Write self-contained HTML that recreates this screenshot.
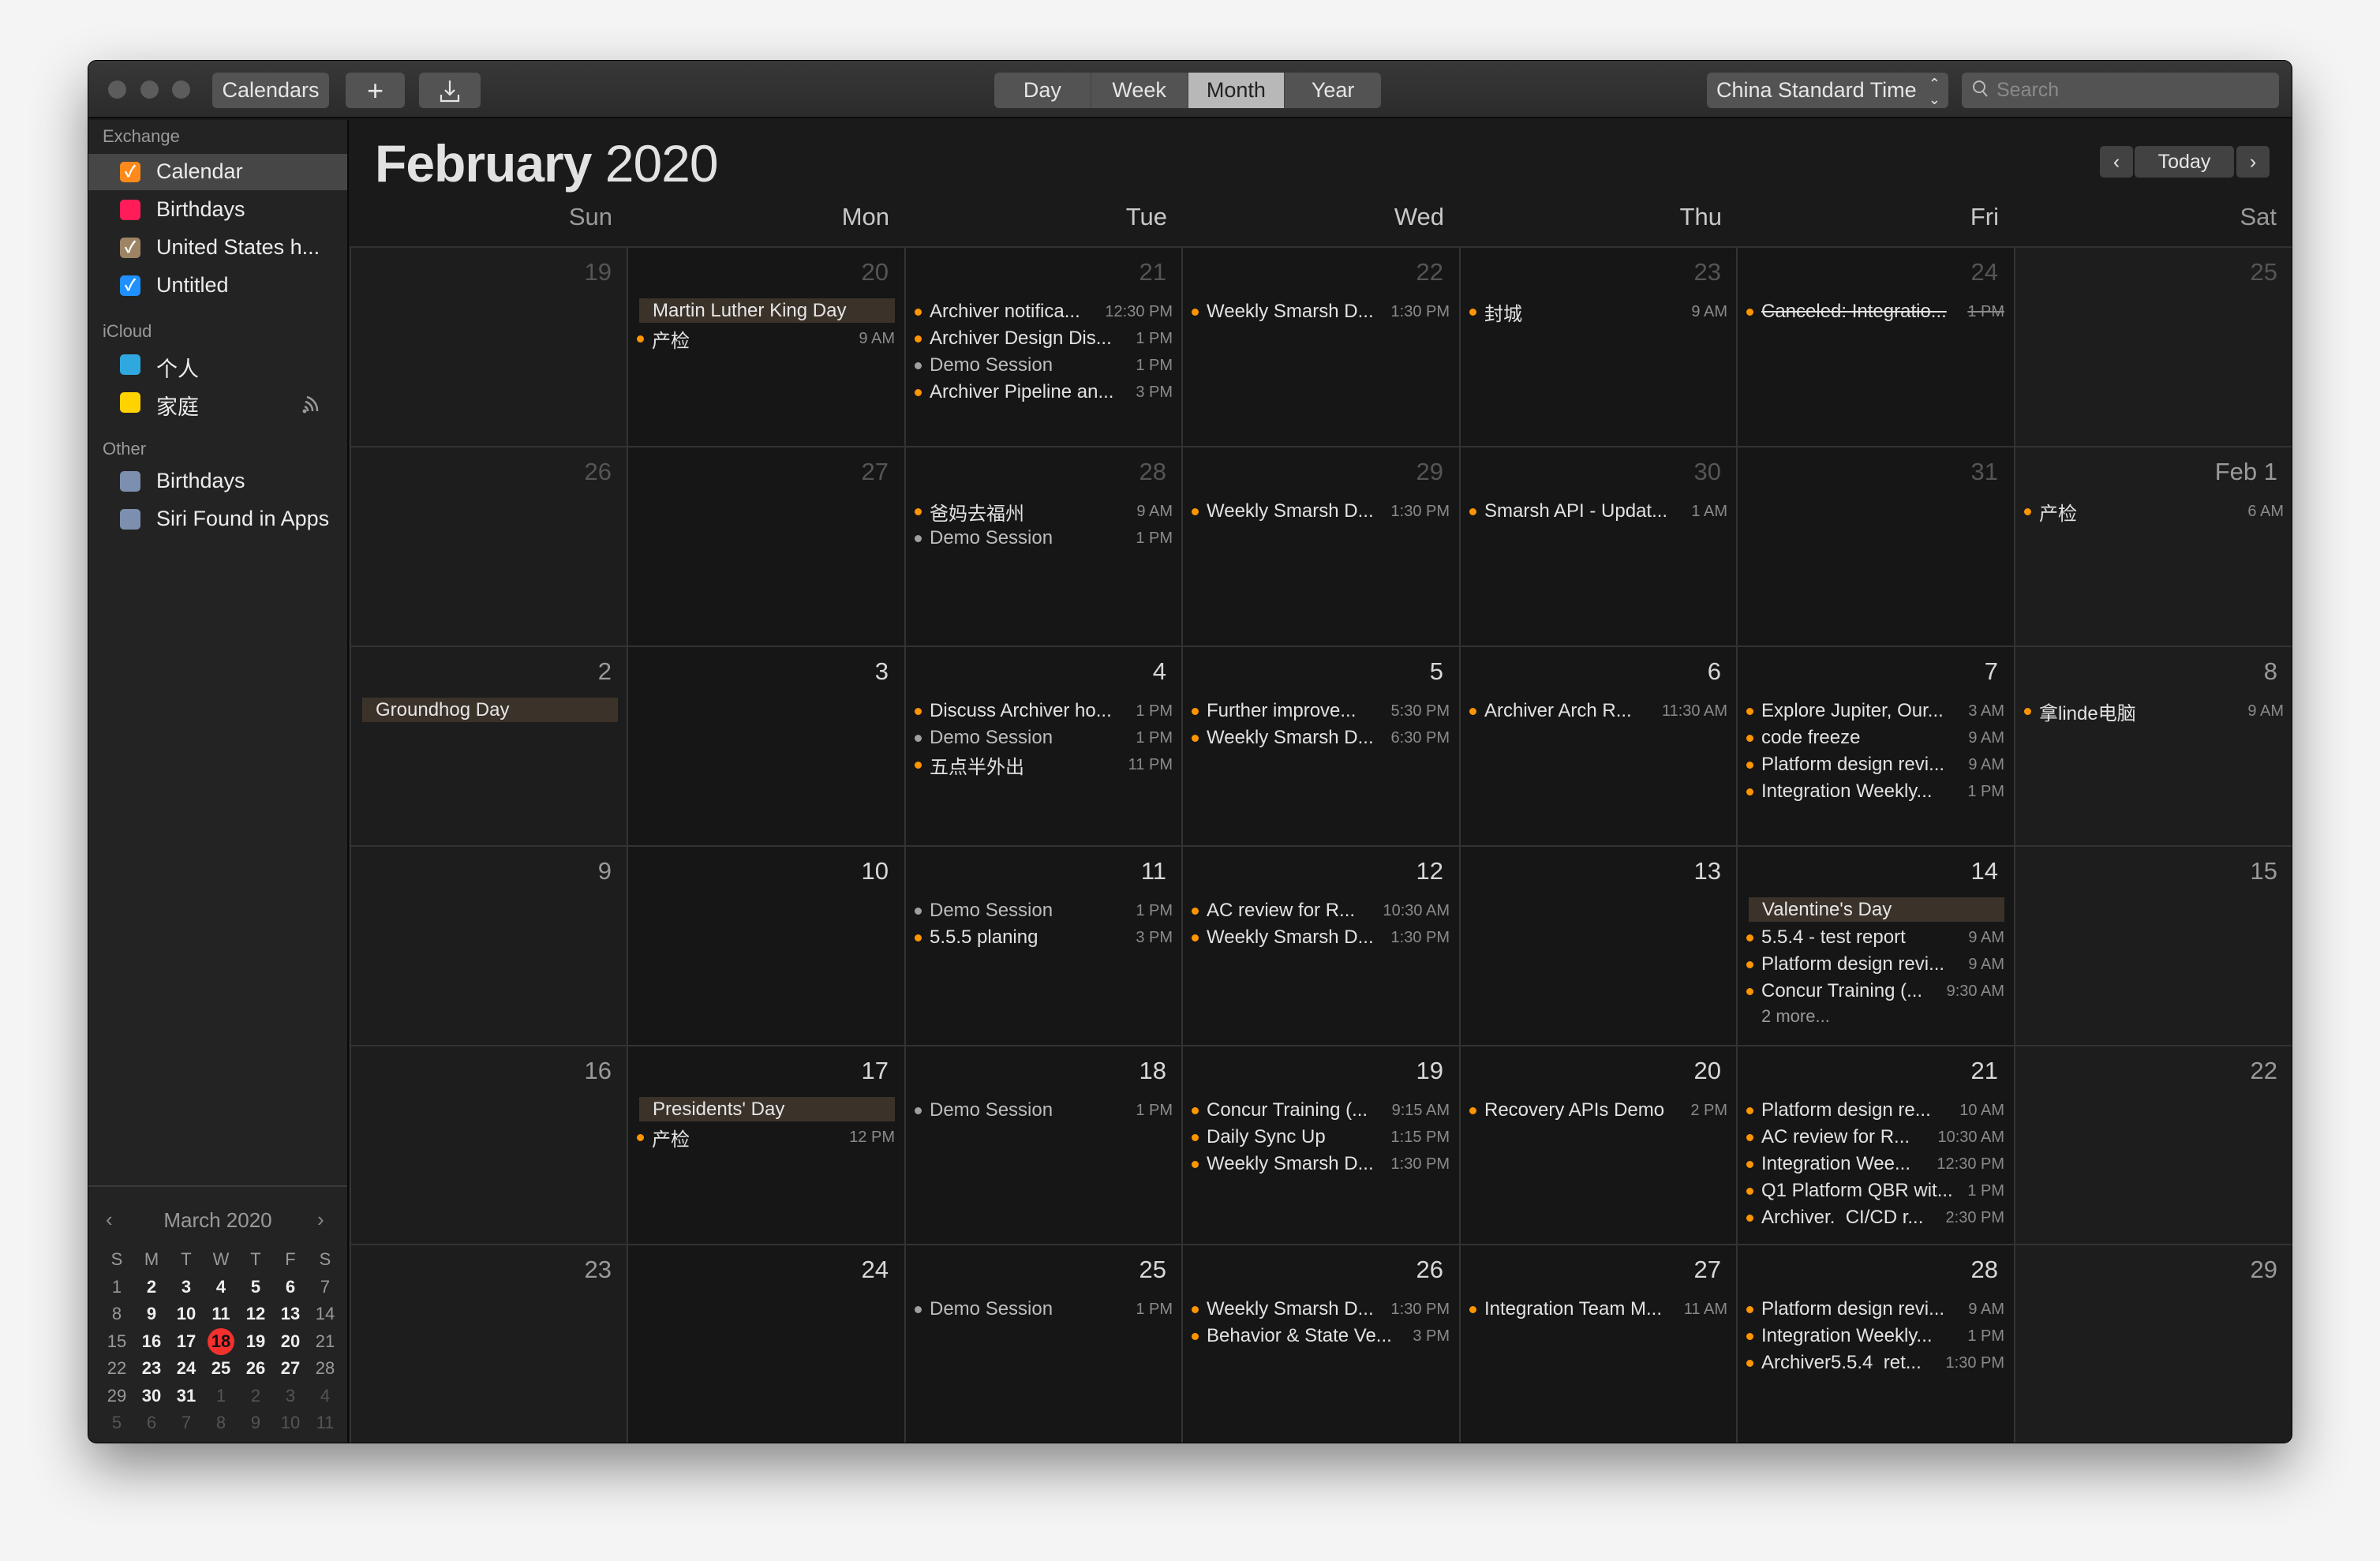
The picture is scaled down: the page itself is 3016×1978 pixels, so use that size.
<!DOCTYPE html>
<html><head><meta charset="utf-8">
<style>
*{box-sizing:border-box;margin:0;padding:0}
body{width:3016px;height:1978px;background:#f4f4f4;font-family:"Liberation Sans","Noto Sans CJK SC",sans-serif;position:relative;overflow:hidden}
.win{position:absolute;left:112px;top:77px;width:2792px;height:1751px;border-radius:10px;overflow:hidden;background:#1a1a1a;box-shadow:0 30px 70px rgba(0,0,0,.45),0 0 0 1px #000}
.tb{position:absolute;left:0;top:0;width:2792px;height:73px;background:linear-gradient(#383838,#2b2b2b);border-bottom:2px solid #0c0c0c}
.tl{position:absolute;top:25px;width:23px;height:23px;border-radius:50%;background:#5c5c5c}
.btn{position:absolute;top:15px;height:45px;border-radius:6px;background:#535353;color:#e6e6e6;font-size:27px;line-height:45px;text-align:center}
.seg{position:absolute;top:15px;height:45px;left:1148px;width:490px;border-radius:6px;background:#535353;display:flex;overflow:hidden}
.seg div{flex:1;color:#e6e6e6;font-size:27px;line-height:45px;text-align:center;border-right:1px solid #444}
.seg .on{background:#b8b8b8;color:#222}
.sb{position:absolute;left:0;top:75px;width:330px;height:1676px;background:#232323;border-right:2px solid #0a0a0a}
.sh{position:absolute;left:18px;font-size:22px;color:#9a9a9a}
.si{position:absolute;left:0;width:328px;height:46px}
.si .bx{position:absolute;left:40px;top:10px;width:26px;height:26px;border-radius:5px}
.si .tx{position:absolute;left:86px;top:7px;font-size:27px;color:#ececec}
.ck{color:#fff;font-size:20px;line-height:26px;text-align:center;font-weight:bold}
.mini{position:absolute;left:0;top:1350px;width:328px;border-top:2px solid #3a3a3a;height:330px}
.title{position:absolute;left:363px;top:92px;font-size:66px;color:#e2e2e2;letter-spacing:-1px}
.wd{position:absolute;top:180px;font-size:31px;color:#c8c8c8;text-align:right;width:300px}
.nav{position:absolute;top:108px;height:40px;background:#424242;border-radius:5px;color:#e6e6e6;font-size:25px;line-height:40px;text-align:center}
.c{position:absolute;width:352px;border-top:2px solid #333;border-left:2px solid #333;background:#161616;overflow:hidden}
.we{background:#1d1d1d}
.n{position:absolute;right:20px;top:13px;font-size:31px;color:#d8d8d8}
.g .n{color:#555}
.we .n{color:#9a9a9a}
.g.we .n{color:#555}
.ev{position:absolute;left:0;right:0;top:64px}
.e{height:34px;display:flex;align-items:center;padding-left:11px;padding-right:12px;white-space:nowrap}
.e i{width:9px;height:9px;border-radius:50%;background:#ff9500;flex:none;margin-right:10px}
.e .t{flex:1;overflow:hidden;font-size:24px;color:#e2e2e2}
.e .m{font-size:20px;color:#8a8a8a;margin-left:8px}
.e.d i{background:#a0a0a0}.e.d .t{color:#bdbdbd}
.e.s .t,.e.s .m{text-decoration:line-through}
.bn{height:31px;margin:0 12px 3px 14px;background:#3b322a;color:#e6e6e6;font-size:24px;line-height:31px;padding-left:17px;white-space:nowrap;overflow:hidden}
.more{font-size:22px;color:#9a9a9a;padding-left:30px;height:30px;line-height:30px}
</style></head><body>
<div class="win">
 <div class="tb">
  <div class="tl" style="left:25px"></div><div class="tl" style="left:66px"></div><div class="tl" style="left:106px"></div>
  <div class="btn" style="left:157px;width:148px">Calendars</div>
  <div class="btn" style="left:326px;width:75px;font-size:36px">+</div>
  <div class="btn" style="left:419px;width:78px"><svg width="26" height="30" viewBox="0 0 26 30" style="margin-top:8px"><path d="M13 2v18M7 14l6 6 6-6M2 20v8h22v-8" fill="none" stroke="#e6e6e6" stroke-width="2.2"/></svg></div>
  <div class="seg"><div>Day</div><div>Week</div><div class="on">Month</div><div style="border:none">Year</div></div>
  <div class="btn" style="left:2051px;width:306px;text-align:left;padding-left:12px">China Standard Time <span style="position:absolute;right:10px;font-size:18px;line-height:20px;top:4px">⌃<br>⌄</span></div>
  <div class="btn" style="left:2374px;width:402px;text-align:left;padding-left:44px;color:#8a8a8a;font-size:25px"><svg width="24" height="26" viewBox="0 0 24 26" style="position:absolute;left:12px;top:8px"><circle cx="10" cy="10" r="7" fill="none" stroke="#bbb" stroke-width="2"/><path d="M15 16l5 6" stroke="#bbb" stroke-width="2"/></svg>Search</div>
 </div>
 <div class="sb">
  <div class="sh" style="top:8px">Exchange</div>
  <div class="si" style="top:43px;background:#464646"><div class="bx ck" style="background:#ff8a1c">✓</div><div class="tx">Calendar</div></div>
  <div class="si" style="top:91px"><div class="bx" style="background:#ff1c58"></div><div class="tx">Birthdays</div></div>
  <div class="si" style="top:139px"><div class="bx ck" style="background:#9c8464">✓</div><div class="tx">United States h...</div></div>
  <div class="si" style="top:187px"><div class="bx ck" style="background:#1e90ff">✓</div><div class="tx">Untitled</div></div>
  <div class="sh" style="top:255px">iCloud</div>
  <div class="si" style="top:287px"><div class="bx" style="background:#2fa8e0"></div><div class="tx">个人</div></div>
  <div class="si" style="top:335px"><div class="bx" style="background:#ffd200"></div><div class="tx">家庭</div><svg width="34" height="28" viewBox="0 0 34 28" style="position:absolute;left:268px;top:10px"><circle cx="6" cy="24" r="2.5" fill="#999"/><path d="M10 24a6 6 0 0 0-4-6M16 24a12 12 0 0 0-9-12M22 24a18 18 0 0 0-13-18" fill="none" stroke="#999" stroke-width="2.5"/></svg></div>
  <div class="sh" style="top:404px">Other</div>
  <div class="si" style="top:435px"><div class="bx" style="background:#7d8fae"></div><div class="tx">Birthdays</div></div>
  <div class="si" style="top:483px"><div class="bx" style="background:#7d8fae"></div><div class="tx">Siri Found in Apps</div></div>
  <div class="mini">
   <div style="position:absolute;left:22px;top:26px;font-size:26px;color:#8a8a8a">‹</div>
   <div style="position:absolute;left:0;width:328px;top:27px;text-align:center;font-size:26px;color:#9a9a9a">March 2020</div>
   <div style="position:absolute;left:290px;top:26px;font-size:26px;color:#8a8a8a">›</div>
   <div style="position:absolute;left:14px;top:75px;font-size:22px;line-height:34.5px;width:300px">
    <div style="display:grid;grid-template-columns:repeat(7,44px);text-align:center;color:#9a9a9a">
     <span>S</span><span>M</span><span>T</span><span>W</span><span>T</span><span>F</span><span>S</span>
     <span>1</span><b style="color:#eee">2</b><b style="color:#eee">3</b><b style="color:#eee">4</b><b style="color:#eee">5</b><b style="color:#eee">6</b><span>7</span>
     <span>8</span><b style="color:#eee">9</b><b style="color:#eee">10</b><b style="color:#eee">11</b><b style="color:#eee">12</b><b style="color:#eee">13</b><span>14</span>
     <span>15</span><b style="color:#eee">16</b><b style="color:#eee">17</b><b style="color:#111;position:relative"><span style="position:absolute;left:5px;top:0;width:34px;height:34px;border-radius:50%;background:#f2312f;z-index:0"></span><span style="position:relative">18</span></b><b style="color:#eee">19</b><b style="color:#eee">20</b><span>21</span>
     <span>22</span><b style="color:#eee">23</b><b style="color:#eee">24</b><b style="color:#eee">25</b><b style="color:#eee">26</b><b style="color:#eee">27</b><span>28</span>
     <span>29</span><b style="color:#eee">30</b><b style="color:#eee">31</b><span style="color:#555">1</span><span style="color:#555">2</span><span style="color:#555">3</span><span style="color:#555">4</span>
     <span style="color:#555">5</span><span style="color:#555">6</span><span style="color:#555">7</span><span style="color:#555">8</span><span style="color:#555">9</span><span style="color:#555">10</span><span style="color:#555">11</span>
    </div>
   </div>
  </div>
 </div>
 <div class="title"><b>February</b> 2020</div>
 <div class="nav" style="left:2549px;width:42px">‹</div>
 <div class="nav" style="left:2593px;width:126px">Today</div>
 <div class="nav" style="left:2722px;width:42px">›</div>
 <div class="wd" style="left:364px;color:#9a9a9a">Sun</div>
 <div class="wd" style="left:715px">Mon</div>
 <div class="wd" style="left:1067px">Tue</div>
 <div class="wd" style="left:1418px">Wed</div>
 <div class="wd" style="left:1770px">Thu</div>
 <div class="wd" style="left:2121px">Fri</div>
 <div class="wd" style="left:2473px;color:#9a9a9a">Sat</div>

 <div class="c we g" style="left:331px;top:235px;height:253px"><div class="n">19</div></div>
 <div class="c g" style="left:682px;top:235px;height:253px"><div class="n">20</div><div class="ev"><div class="bn">Martin Luther King Day</div><div class="e"><i></i><span class="t">产检</span><span class="m">9 AM</span></div></div></div>
 <div class="c g" style="left:1034px;top:235px;height:253px"><div class="n">21</div><div class="ev"><div class="e"><i></i><span class="t">Archiver notifica...</span><span class="m">12:30 PM</span></div><div class="e"><i></i><span class="t">Archiver Design Dis...</span><span class="m">1 PM</span></div><div class="e d"><i></i><span class="t">Demo Session</span><span class="m">1 PM</span></div><div class="e"><i></i><span class="t">Archiver Pipeline an...</span><span class="m">3 PM</span></div></div></div>
 <div class="c g" style="left:1385px;top:235px;height:253px"><div class="n">22</div><div class="ev"><div class="e"><i></i><span class="t">Weekly Smarsh D...</span><span class="m">1:30 PM</span></div></div></div>
 <div class="c g" style="left:1737px;top:235px;height:253px"><div class="n">23</div><div class="ev"><div class="e"><i></i><span class="t">封城</span><span class="m">9 AM</span></div></div></div>
 <div class="c g" style="left:2088px;top:235px;height:253px"><div class="n">24</div><div class="ev"><div class="e s"><i></i><span class="t">Canceled: Integratio...</span><span class="m">1 PM</span></div></div></div>
 <div class="c we g" style="left:2440px;top:235px;height:253px;width:354px"><div class="n">25</div></div>

 <div class="c we g" style="left:331px;top:488px;height:253px"><div class="n">26</div></div>
 <div class="c g" style="left:682px;top:488px;height:253px"><div class="n">27</div></div>
 <div class="c g" style="left:1034px;top:488px;height:253px"><div class="n">28</div><div class="ev"><div class="e"><i></i><span class="t">爸妈去福州</span><span class="m">9 AM</span></div><div class="e d"><i></i><span class="t">Demo Session</span><span class="m">1 PM</span></div></div></div>
 <div class="c g" style="left:1385px;top:488px;height:253px"><div class="n">29</div><div class="ev"><div class="e"><i></i><span class="t">Weekly Smarsh D...</span><span class="m">1:30 PM</span></div></div></div>
 <div class="c g" style="left:1737px;top:488px;height:253px"><div class="n">30</div><div class="ev"><div class="e"><i></i><span class="t">Smarsh API - Updat...</span><span class="m">1 AM</span></div></div></div>
 <div class="c g" style="left:2088px;top:488px;height:253px"><div class="n">31</div></div>
 <div class="c we" style="left:2440px;top:488px;height:253px;width:354px"><div class="n">Feb 1</div><div class="ev"><div class="e"><i></i><span class="t">产检</span><span class="m">6 AM</span></div></div></div>

 <div class="c we" style="left:331px;top:741px;height:253px"><div class="n">2</div><div class="ev"><div class="bn">Groundhog Day</div></div></div>
 <div class="c" style="left:682px;top:741px;height:253px"><div class="n">3</div></div>
 <div class="c" style="left:1034px;top:741px;height:253px"><div class="n">4</div><div class="ev"><div class="e"><i></i><span class="t">Discuss Archiver ho...</span><span class="m">1 PM</span></div><div class="e d"><i></i><span class="t">Demo Session</span><span class="m">1 PM</span></div><div class="e"><i></i><span class="t">五点半外出</span><span class="m">11 PM</span></div></div></div>
 <div class="c" style="left:1385px;top:741px;height:253px"><div class="n">5</div><div class="ev"><div class="e"><i></i><span class="t">Further improve...</span><span class="m">5:30 PM</span></div><div class="e"><i></i><span class="t">Weekly Smarsh D...</span><span class="m">6:30 PM</span></div></div></div>
 <div class="c" style="left:1737px;top:741px;height:253px"><div class="n">6</div><div class="ev"><div class="e"><i></i><span class="t">Archiver Arch R...</span><span class="m">11:30 AM</span></div></div></div>
 <div class="c" style="left:2088px;top:741px;height:253px"><div class="n">7</div><div class="ev"><div class="e"><i></i><span class="t">Explore Jupiter, Our...</span><span class="m">3 AM</span></div><div class="e"><i></i><span class="t">code freeze</span><span class="m">9 AM</span></div><div class="e"><i></i><span class="t">Platform design revi...</span><span class="m">9 AM</span></div><div class="e"><i></i><span class="t">Integration Weekly...</span><span class="m">1 PM</span></div></div></div>
 <div class="c we" style="left:2440px;top:741px;height:253px;width:354px"><div class="n">8</div><div class="ev"><div class="e"><i></i><span class="t">拿linde电脑</span><span class="m">9 AM</span></div></div></div>

 <div class="c we" style="left:331px;top:994px;height:253px"><div class="n">9</div></div>
 <div class="c" style="left:682px;top:994px;height:253px"><div class="n">10</div></div>
 <div class="c" style="left:1034px;top:994px;height:253px"><div class="n">11</div><div class="ev"><div class="e d"><i></i><span class="t">Demo Session</span><span class="m">1 PM</span></div><div class="e"><i></i><span class="t">5.5.5 planing</span><span class="m">3 PM</span></div></div></div>
 <div class="c" style="left:1385px;top:994px;height:253px"><div class="n">12</div><div class="ev"><div class="e"><i></i><span class="t">AC review for R...</span><span class="m">10:30 AM</span></div><div class="e"><i></i><span class="t">Weekly Smarsh D...</span><span class="m">1:30 PM</span></div></div></div>
 <div class="c" style="left:1737px;top:994px;height:253px"><div class="n">13</div></div>
 <div class="c" style="left:2088px;top:994px;height:253px"><div class="n">14</div><div class="ev"><div class="bn">Valentine's Day</div><div class="e"><i></i><span class="t">5.5.4 - test report</span><span class="m">9 AM</span></div><div class="e"><i></i><span class="t">Platform design revi...</span><span class="m">9 AM</span></div><div class="e"><i></i><span class="t">Concur Training (...</span><span class="m">9:30 AM</span></div><div class="more">2 more...</div></div></div>
 <div class="c we" style="left:2440px;top:994px;height:253px;width:354px"><div class="n">15</div></div>

 <div class="c we" style="left:331px;top:1247px;height:252px"><div class="n">16</div></div>
 <div class="c" style="left:682px;top:1247px;height:252px"><div class="n">17</div><div class="ev"><div class="bn">Presidents' Day</div><div class="e"><i></i><span class="t">产检</span><span class="m">12 PM</span></div></div></div>
 <div class="c" style="left:1034px;top:1247px;height:252px"><div class="n">18</div><div class="ev"><div class="e d"><i></i><span class="t">Demo Session</span><span class="m">1 PM</span></div></div></div>
 <div class="c" style="left:1385px;top:1247px;height:252px"><div class="n">19</div><div class="ev"><div class="e"><i></i><span class="t">Concur Training (...</span><span class="m">9:15 AM</span></div><div class="e"><i></i><span class="t">Daily Sync Up</span><span class="m">1:15 PM</span></div><div class="e"><i></i><span class="t">Weekly Smarsh D...</span><span class="m">1:30 PM</span></div></div></div>
 <div class="c" style="left:1737px;top:1247px;height:252px"><div class="n">20</div><div class="ev"><div class="e"><i></i><span class="t">Recovery APIs Demo</span><span class="m">2 PM</span></div></div></div>
 <div class="c" style="left:2088px;top:1247px;height:252px"><div class="n">21</div><div class="ev"><div class="e"><i></i><span class="t">Platform design re...</span><span class="m">10 AM</span></div><div class="e"><i></i><span class="t">AC review for R...</span><span class="m">10:30 AM</span></div><div class="e"><i></i><span class="t">Integration Wee...</span><span class="m">12:30 PM</span></div><div class="e"><i></i><span class="t">Q1 Platform QBR wit...</span><span class="m">1 PM</span></div><div class="e"><i></i><span class="t">Archiver.&nbsp; CI/CD r...</span><span class="m">2:30 PM</span></div></div></div>
 <div class="c we" style="left:2440px;top:1247px;height:252px;width:354px"><div class="n">22</div></div>

 <div class="c we" style="left:331px;top:1499px;height:252px"><div class="n">23</div></div>
 <div class="c" style="left:682px;top:1499px;height:252px"><div class="n">24</div></div>
 <div class="c" style="left:1034px;top:1499px;height:252px"><div class="n">25</div><div class="ev"><div class="e d"><i></i><span class="t">Demo Session</span><span class="m">1 PM</span></div></div></div>
 <div class="c" style="left:1385px;top:1499px;height:252px"><div class="n">26</div><div class="ev"><div class="e"><i></i><span class="t">Weekly Smarsh D...</span><span class="m">1:30 PM</span></div><div class="e"><i></i><span class="t">Behavior &amp; State Ve...</span><span class="m">3 PM</span></div></div></div>
 <div class="c" style="left:1737px;top:1499px;height:252px"><div class="n">27</div><div class="ev"><div class="e"><i></i><span class="t">Integration Team M...</span><span class="m">11 AM</span></div></div></div>
 <div class="c" style="left:2088px;top:1499px;height:252px"><div class="n">28</div><div class="ev"><div class="e"><i></i><span class="t">Platform design revi...</span><span class="m">9 AM</span></div><div class="e"><i></i><span class="t">Integration Weekly...</span><span class="m">1 PM</span></div><div class="e"><i></i><span class="t">Archiver5.5.4&nbsp; ret...</span><span class="m">1:30 PM</span></div></div></div>
 <div class="c we" style="left:2440px;top:1499px;height:252px;width:354px"><div class="n">29</div></div>
</div>
</body></html>
